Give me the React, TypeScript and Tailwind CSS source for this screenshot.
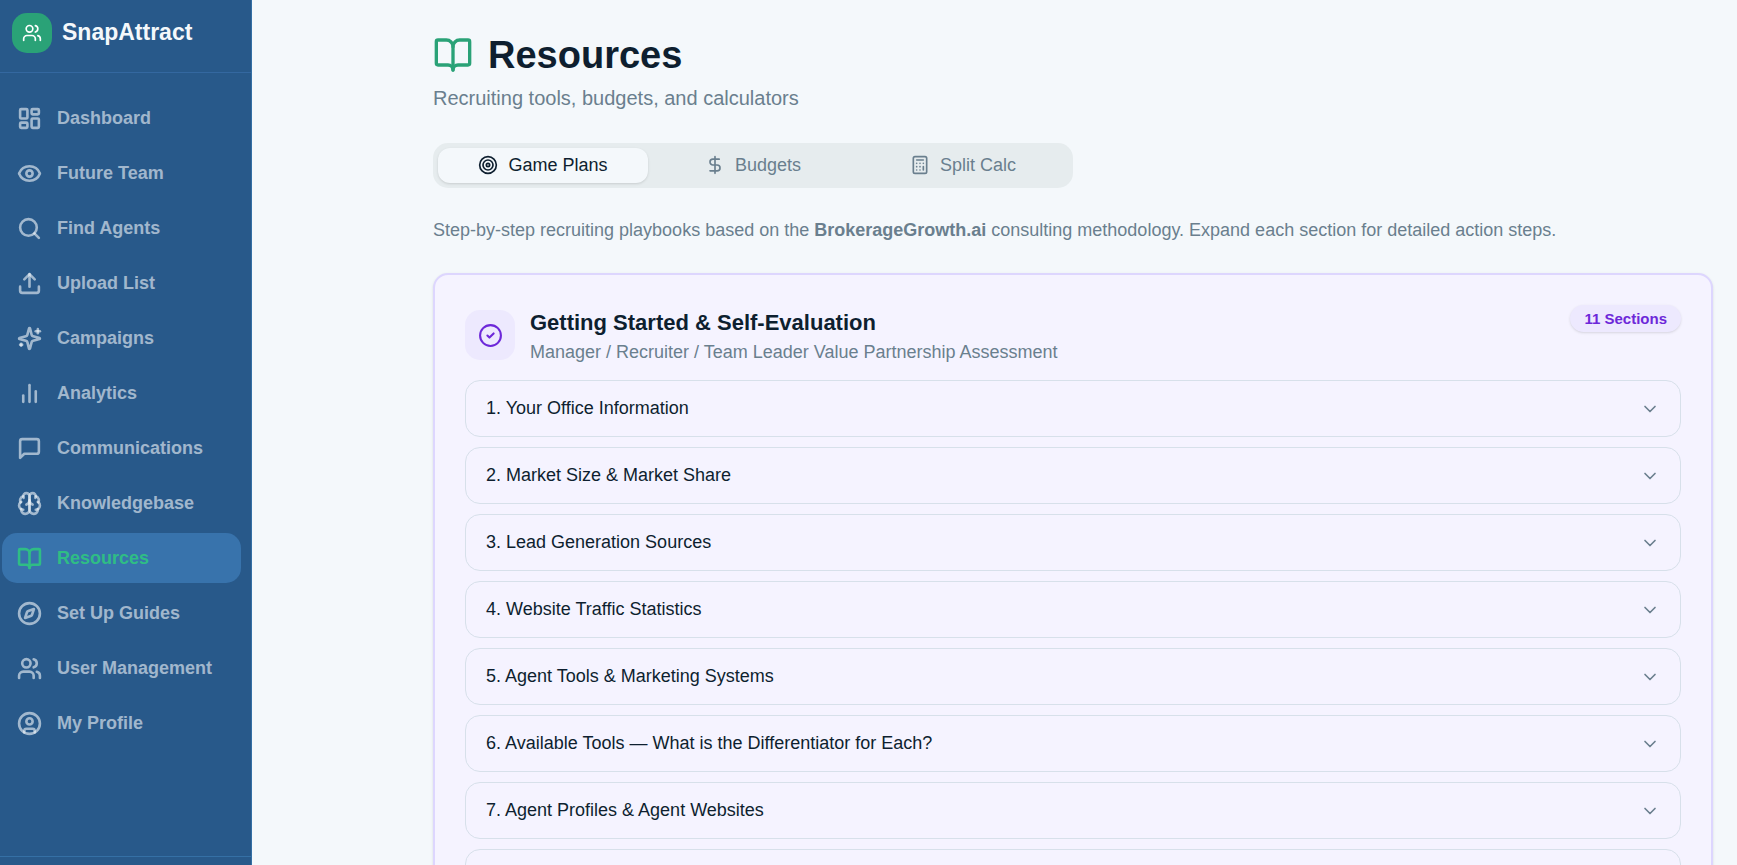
import type { ComponentType } from "react";
import { createLucideIcon } from "lucide-react";
import {
  BookOpen,
  Calculator,
  ChevronDown,
  CircleCheck,
  Compass,
  DollarSign,
  Eye,
  LayoutDashboard,
  Search,
  Target,
  Upload,
  Users,
} from "lucide-react";

type IconProps = { size?: number; strokeWidth?: number; className?: string };
type NavItem = { label: string; icon: ComponentType<IconProps>; active?: boolean };

const Sparkles = createLucideIcon("sparkles", [
  [
    "path",
    {
      d: "M9.937 15.5A2 2 0 0 0 8.5 14.063l-6.135-1.582a.5.5 0 0 1 0-.962L8.5 9.936A2 2 0 0 0 9.937 8.5l1.582-6.135a.5.5 0 0 1 .963 0L14.063 8.5A2 2 0 0 0 15.5 9.937l6.135 1.581a.5.5 0 0 1 0 .964L15.5 14.063a2 2 0 0 0-1.437 1.437l-1.582 6.135a.5.5 0 0 1-.963 0z",
      key: "star",
    },
  ],
  ["path", { d: "M20 3v4", key: "a" }],
  ["path", { d: "M22 5h-4", key: "b" }],
  ["path", { d: "M4 17v2", key: "c" }],
  ["path", { d: "M5 18H3", key: "d" }],
]);

const Bars = createLucideIcon("bars", [
  ["path", { d: "M18 20V10", key: "a" }],
  ["path", { d: "M12 20V4", key: "b" }],
  ["path", { d: "M6 20v-6", key: "c" }],
]);

const Message = createLucideIcon("message", [
  ["path", { d: "M21 15a2 2 0 0 1-2 2H7l-4 4V5a2 2 0 0 1 2-2h14a2 2 0 0 1 2 2z", key: "a" }],
]);

const Brain = createLucideIcon("brain", [
  ["path", { d: "M12 5a3 3 0 1 0-5.997.125 4 4 0 0 0-2.526 5.77 4 4 0 0 0 .556 6.588A4 4 0 1 0 12 18Z", key: "a" }],
  ["path", { d: "M12 5a3 3 0 1 1 5.997.125 4 4 0 0 1 2.526 5.77 4 4 0 0 1-.556 6.588A4 4 0 1 1 12 18Z", key: "b" }],
  ["path", { d: "M15 13a4.5 4.5 0 0 1-3-4 4.5 4.5 0 0 1-3 4", key: "c" }],
  ["path", { d: "M17.599 6.5a3 3 0 0 0 .399-1.375", key: "d" }],
  ["path", { d: "M6.003 5.125A3 3 0 0 0 6.401 6.5", key: "e" }],
  ["path", { d: "M3.477 10.896a4 4 0 0 1 .585-.396", key: "f" }],
  ["path", { d: "M19.938 10.5a4 4 0 0 1 .585.396", key: "g" }],
  ["path", { d: "M6 18a4 4 0 0 1-1.967-.516", key: "h" }],
  ["path", { d: "M19.967 17.484A4 4 0 0 1 18 18", key: "i" }],
]);

const Profile = createLucideIcon("profile", [
  ["circle", { cx: "12", cy: "12", r: "10", key: "a" }],
  ["circle", { cx: "12", cy: "10", r: "3", key: "b" }],
  ["path", { d: "M7 20.662V19a2 2 0 0 1 2-2h6a2 2 0 0 1 2 2v1.662", key: "c" }],
]);

const navItems: NavItem[] = [
  { label: "Dashboard", icon: LayoutDashboard },
  { label: "Future Team", icon: Eye },
  { label: "Find Agents", icon: Search },
  { label: "Upload List", icon: Upload },
  { label: "Campaigns", icon: Sparkles },
  { label: "Analytics", icon: Bars },
  { label: "Communications", icon: Message },
  { label: "Knowledgebase", icon: Brain },
  { label: "Resources", icon: BookOpen, active: true },
  { label: "Set Up Guides", icon: Compass },
  { label: "User Management", icon: Users },
  { label: "My Profile", icon: Profile },
];

const tabs: NavItem[] = [
  { label: "Game Plans", icon: Target, active: true },
  { label: "Budgets", icon: DollarSign },
  { label: "Split Calc", icon: Calculator },
];

const sections = [
  "1. Your Office Information",
  "2. Market Size & Market Share",
  "3. Lead Generation Sources",
  "4. Website Traffic Statistics",
  "5. Agent Tools & Marketing Systems",
  "6. Available Tools — What is the Differentiator for Each?",
  "7. Agent Profiles & Agent Websites",
];

function Sidebar() {
  return (
    <aside className="flex w-[252px] shrink-0 flex-col border-r border-[#3570a5] bg-[#28598a]">
      <div className="flex h-[73px] shrink-0 items-start gap-2.5 border-b border-[#3468a0] px-3 pt-[13px]">
        <span className="flex size-10 items-center justify-center rounded-[15px] bg-[#2aa277] text-white">
          <Users size={20} />
        </span>
        <span className="text-[23px] leading-[38px] font-bold text-[#f4f8fb]">SnapAttract</span>
      </div>
      <nav className="flex flex-1 flex-col gap-[5px] pt-5 pr-2.5 pl-0.5">
        {navItems.map(({ label, icon: Icon, active }) => (
          <a
            key={label}
            href="#"
            aria-current={active ? "page" : undefined}
            className={`flex h-[50px] shrink-0 items-center gap-[15px] rounded-[15px] px-[15px] text-[18px] font-bold ${
              active ? "bg-[#3873ac] text-[#2fbd85]" : "text-[#f4f8fb]/60"
            }`}
          >
            <Icon size={25} strokeWidth={2.5} />
            {label}
          </a>
        ))}
      </nav>
      <div className="h-[9px] shrink-0 border-t border-[#3570a5]" />
    </aside>
  );
}

export default function App() {
  return (
    <div className="flex h-screen overflow-hidden bg-[#f4f8fb] font-['Liberation_Sans',Arial,sans-serif] text-[#0e1f2f]">
      <Sidebar />
      <main className="min-w-0 flex-1 overflow-hidden px-6">
        <div className="ml-auto max-w-[1280px] pt-8">
          <header>
            <h1 className="flex items-center gap-[15px] text-[38px] leading-[46px] font-bold">
              <BookOpen size={40} className="text-[#2aa277]" />
              Resources
            </h1>
            <p className="mt-1.5 text-[20px] leading-7 text-[#6a7f8e]">
              Recruiting tools, budgets, and calculators
            </p>
          </header>

          <div role="tablist" className="mt-[31px] grid h-[45px] max-w-[640px] grid-cols-3 rounded-[15px] bg-[#e6ecee] p-[5px]">
            {tabs.map(({ label, icon: Icon, active }) => (
              <button
                key={label}
                type="button"
                role="tab"
                aria-selected={Boolean(active)}
                className={`flex items-center justify-center gap-2.5 rounded-[12px] pb-0.5 text-[18px] leading-6 ${
                  active ? "bg-[#f4f8fb] shadow-sm" : "text-[#6a7f8e]"
                }`}
              >
                <Icon size={20} />
                {label}
              </button>
            ))}
          </div>

          <p className="mt-[30px] text-[18px] leading-6 text-[#6a7f8e]">
            Step-by-step recruiting playbooks based on the <strong>BrokerageGrowth.ai</strong> consulting
            methodology. Expand each section for detailed action steps.
          </p>

          <section className="mt-[31px] rounded-[15px] border-2 border-[#ddd6fe] bg-[#f5f3ff] px-[30px] pt-[30px] shadow-sm">
            <div className="flex items-start justify-between">
              <div className="flex gap-[15px]">
                <span className="mt-[5px] flex size-[50px] items-center justify-center rounded-[15px] bg-[#ede9fe] text-[#6d28d9]">
                  <CircleCheck size={25} />
                </span>
                <div>
                  <h2 className="text-[22px] leading-[35px] font-bold">Getting Started &amp; Self-Evaluation</h2>
                  <p className="text-[18px] leading-6 text-[#6a7f8e]">
                    Manager / Recruiter / Team Leader Value Partnership Assessment
                  </p>
                </div>
              </div>
              <span className="rounded-full bg-[#ede9fe] px-3.5 text-[15px] leading-[27px] font-bold text-[#6d28d9] shadow-sm">
                11 Sections
              </span>
            </div>
            <div className="mt-4 flex flex-col gap-2.5">
              {sections.map((title) => (
                <button
                  key={title}
                  type="button"
                  className="flex h-[57px] items-center justify-between rounded-[15px] border border-[#d7e0ea] px-5 text-left text-[18px]"
                >
                  {title}
                  <ChevronDown size={20} className="text-[#6a7f8e]" />
                </button>
              ))}
              <div className="h-[57px] rounded-[15px] border border-[#d7e0ea]" />
            </div>
          </section>
        </div>
      </main>
    </div>
  );
}
